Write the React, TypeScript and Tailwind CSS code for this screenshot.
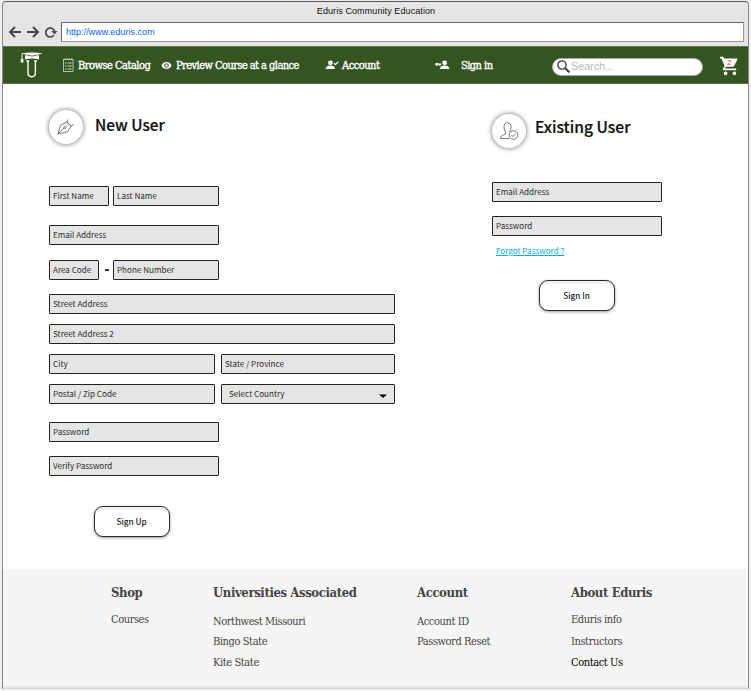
import type { ReactNode } from "react";
import { MdRemoveRedEye } from "react-icons/md";

function Field({ label, className, pad = "pl-[3px]", children }: { label: string; className: string; pad?: string; children?: ReactNode }) {
  return (
    <div className={`flex items-center justify-between rounded-[1px] border border-[#222] bg-[#e5e5e5] ${pad} text-[8.1px] leading-none text-[#2b2b2b] whitespace-nowrap ${className}`}>
      <span>{label}</span>
      {children}
    </div>
  );
}

function RoundIcon({ children }: { children: ReactNode }) {
  return (
    <div className="flex size-[34px] shrink-0 items-center justify-center rounded-full bg-white shadow-[0_0_4px_1px_rgba(0,0,0,0.42)]">
      {children}
    </div>
  );
}

function Button({ label, className }: { label: string; className: string }) {
  return (
    <button className={`flex h-[31px] w-[76px] items-center justify-center rounded-[9px] border border-[#2b2b2b] bg-white pr-px text-[8.2px] leading-none font-medium text-[#222] shadow-[0_1px_3px_rgba(0,0,0,0.4),inset_0_3px_0_#f2f2f2] ${className}`}>
      {label}
    </button>
  );
}

function Column({ title, className, children }: { title: string; className: string; children: ReactNode }) {
  return (
    <div className={`shrink-0 text-[11px] leading-[20px] tracking-[-0.42px] text-[#444] ${className}`}>
      <h3 className="h-[17px] text-[13px] leading-[16px] font-bold tracking-[-0.4px] text-[#444]">{title}</h3>
      {children}
    </div>
  );
}

export default function App() {
  return (
    <div className="h-[691px] w-[751px] overflow-hidden bg-[#f0f0f0] pt-px pl-[2px] font-['Noto_Sans_CJK_JP','Noto_Sans',sans-serif] whitespace-nowrap">
      <div className="flex h-[688px] w-[747px] flex-col rounded-t-[4px] border border-[#555] border-x-[#888] border-b-[#d6d6d6] bg-[#e5e5e5]">
        <header className="h-[44px] shrink-0">
          <div className="h-[20px] pt-[3px] pl-[1px] text-center font-['Liberation_Sans',Arial,sans-serif] text-[9px] leading-[12px] tracking-[0.09px] text-[#111]">
            Eduris Community Education
          </div>
          <div className="flex h-[20px] items-center">
            <svg className="ml-[5px] h-[14px] w-[50px] shrink-0" viewBox="0 0 50 14" fill="none" stroke="#484848" strokeWidth="2">
              <path d="M13 7H2M7 2L2 7l5 5M19 7h11M25 2l5 5-5 5" />
              <path d="M45.8 10.2A4.5 4.5 0 1 1 46.6 6.5" strokeWidth="1.7" />
              <path d="M43.4 6h6l-2.9 3.5z" fill="#484848" stroke="none" />
            </svg>
            <div className="ml-[3px] flex h-[20px] w-[683px] items-center border border-[#666] border-r-[#999] border-b-[#999] bg-white pt-px pl-[4px] font-['Liberation_Sans',Arial,sans-serif] text-[9px] tracking-[0.03px] text-[#0864e8]">
              http://www.eduris.com
            </div>
          </div>
        </header>

        <nav className="flex h-[38px] shrink-0 items-center border-t border-b border-t-[#5e7850] border-b-[#53723f] bg-[#345422] font-['DejaVu_Serif_Condensed','DejaVu_Serif',serif] text-[11px] leading-none text-white">
          <svg className="ml-[17px] h-[27px] w-[24px] shrink-0" viewBox="0 0 24 27" fill="white">
            <path d="M1 1.6Q12-.8 23 1.6L12 3.8z" />
            <path d="M5 3l7 1.4L19 3v4.6q-7-2.2-14 0z" />
            <path d="M1.6 1.6h.9v6h-.9zM.8 7h2.6v3.6H.8z" />
            <path d="M8 9v11.5q0 4.2 3.7 4.2t3.7-4.2V9M6.3 9h3M14 9h3" fill="none" stroke="white" strokeWidth="1.4" />
          </svg>
          <svg className="ml-[19px] h-[14px] w-[11px] shrink-0" viewBox="0 0 11 14" fill="none" stroke="#d3ddcd">
            <rect x=".5" y="1.5" width="9.5" height="12" strokeWidth=".8" />
            <path d="M2 0v2M4.2 0v2M6.4 0v2M8.6 0v2" strokeWidth=".7" />
            <path d="M2 5h1.4M2 8h1.4M2 11h1.4M4.6 5h4M4.6 8h4M4.6 11h4" strokeWidth="1.1" />
          </svg>
          <span className="ml-[4px] w-[83px] shrink-0 tracking-[-0.5px] [-webkit-text-stroke:0.35px_white]">Browse Catalog</span>
          <MdRemoveRedEye className="mt-px size-[11px] shrink-0" />
          <span className="ml-[4px] w-[149px] shrink-0 tracking-[-0.56px] [-webkit-text-stroke:0.35px_white]">Preview Course at a glance</span>
          <svg className="h-[10px] w-[14px] shrink-0" viewBox="0 0 14 10" fill="white">
            <circle cx="5.4" cy="2.8" r="2.4" />
            <path d="M.8 9V7.7Q1.8 5.6 5.4 5.6T10 7.7V9z" />
            <path d="M9 3.2l1.4 1.5L13.4 1.7" fill="none" stroke="white" strokeWidth="1.2" />
          </svg>
          <span className="ml-[3px] w-[93px] shrink-0 tracking-[-0.5px] [-webkit-text-stroke:0.35px_white]">Account</span>
          <svg className="h-[10px] w-[15px] shrink-0" viewBox="0 0 15 10" fill="white">
            <circle cx="9.6" cy="2.8" r="2.4" />
            <path d="M5 9V7.7Q6 5.6 9.6 5.6t4.6 2.1V9z" />
            <circle cx="1.7" cy="4.2" r="1.5" />
            <path d="M2 3.6h4v1.2H5.4V6H4.2V4.8H2z" />
          </svg>
          <span className="ml-[11px] w-[91px] shrink-0 tracking-[-0.55px] [-webkit-text-stroke:0.35px_white]">Sign in</span>
          <div className="mt-[3px] flex h-[18px] w-[151px] shrink-0 items-center rounded-full border border-[#aaa] bg-white pl-[4px] font-['Liberation_Sans',Arial,sans-serif] text-[11px] text-[#b9b9b9]">
            <svg className="size-[13px]" viewBox="0 0 13 13" fill="none" stroke="#3c3c3c">
              <circle cx="5" cy="5" r="4.1" strokeWidth="1.4" />
              <path d="M8 8l4.4 4.4" strokeWidth="2" />
            </svg>
            <span className="ml-px tracking-[-0.15px]">Search...</span>
          </div>
          <div className="relative mt-[2px] ml-[16px] h-[20px] w-[20px] shrink-0">
            <svg className="h-[20px] w-[20px]" viewBox="0 0 20 20" fill="white">
              <path d="M1 .8h3.3l.9 1.8h12.6q1 0 .6 1l-3.2 6.2q-.5 1-1.6 1H7l-1 1.8h11.2v1.6H5.2q-2 0-1-2l1.4-2.3L2.5 2.4H1z" />
              <circle cx="6.6" cy="17.4" r="1.8" />
              <circle cx="15.4" cy="17.4" r="1.8" />
            </svg>
            <span className="absolute top-[3px] left-[8px] font-['Liberation_Sans',Arial,sans-serif] text-[8px] leading-none text-[#e33b20]">2</span>
          </div>
        </nav>

        <main className="flex h-[485px] shrink-0 bg-white">
          <section className="ml-[46px] w-[443px] shrink-0">
            <div className="flex h-[102px] pt-[26px]">
              <RoundIcon>
                <svg className="size-[18px]" viewBox="0 0 18 18" fill="none" stroke="#555" strokeWidth=".8">
                  <path d="M1 16L3.6 7.2 10 4l4 4.2-3.4 5.6zM1 16l6-6M11.2 1.5L10 4l4 4.2 3-2" />
                  <circle cx="7.9" cy="9.3" r="1.1" />
                </svg>
              </RoundIcon>
              <h2 className="mt-[2px] ml-[12px] h-[24px] text-[15.4px] leading-[24px] font-medium text-[#111] [-webkit-text-stroke:0.2px_#111]">New User</h2>
            </div>
            <div className="flex gap-[4px]">
              <Field label="First Name" className="h-[20px] w-[60px]" />
              <Field label="Last Name" className="h-[20px] w-[106px]" />
            </div>
            <Field label="Email Address" className="mt-[19px] h-[20px] w-[170px]" />
            <div className="mt-[15px] flex items-center">
              <Field label="Area Code" className="h-[20px] w-[50px]" />
              <div className="-mt-px ml-[6px] h-[2px] w-[4px] bg-[#333]" />
              <Field label="Phone Number" className="ml-[4px] h-[20px] w-[106px]" />
            </div>
            <Field label="Street Address" className="mt-[14px] h-[20px] w-[346px]" />
            <Field label="Street Address 2" className="mt-[10px] h-[20px] w-[346px]" />
            <div className="mt-[10px] flex gap-[6px]">
              <Field label="City" className="h-[20px] w-[166px]" />
              <Field label="State / Province" className="h-[20px] w-[174px]" />
            </div>
            <div className="mt-[10px] flex gap-[6px]">
              <Field label="Postal / Zip Code" className="h-[20px] w-[166px]" />
              <Field label="Select Country" pad="pl-[7px] pr-[7px]" className="h-[20px] w-[174px]">
                <svg className="mt-[3px] h-[4px] w-[8px]" viewBox="0 0 8 4"><path d="M0 .5h8L4 4z" fill="black" /></svg>
              </Field>
            </div>
            <Field label="Password" className="mt-[18px] h-[20px] w-[170px]" />
            <Field label="Verify Password" className="mt-[14px] h-[20px] w-[170px]" />
            <Button label="Sign Up" className="mt-[30px] ml-[45px]" />
          </section>

          <section className="shrink-0">
            <div className="flex h-[98px] pt-[30px]">
              <RoundIcon>
                <svg className="size-[20px]" viewBox="0 0 20 20" fill="none" stroke="#555" strokeWidth=".8">
                  <path d="M10.5 17.5H1.5q0-3 3-3.6 2.5-.5 2.2-2.3Q5 9.5 5 6q0-4.3 3.5-4.3T12 6q0 3-1.5 5" />
                  <circle cx="14.5" cy="14" r="4.3" />
                  <path d="M12.5 14l1.5 1.5 3-3" />
                </svg>
              </RoundIcon>
              <h2 className="ml-[9px] h-[24px] text-[15.6px] leading-[24px] font-medium text-[#111] [-webkit-text-stroke:0.2px_#111]">Existing User</h2>
            </div>
            <Field label="Email Address" className="h-[20px] w-[170px]" />
            <Field label="Password" className="mt-[14px] h-[20px] w-[170px]" />
            <a className="mt-[9px] ml-[4px] block h-[12px] text-[8.1px] leading-[12px] text-[#08a9ee] underline">Forgot Password ?</a>
            <Button label="Sign In" className="mt-[23px] ml-[47px]" />
          </section>
        </main>

        <footer className="flex h-[117px] shrink-0 bg-[#f5f5f5] pt-[16px] pl-[108px] font-['DejaVu_Serif_Condensed','DejaVu_Serif',serif]">
          <Column title="Shop" className="w-[102px]">
            <p className="mt-[8px]">Courses</p>
          </Column>
          <Column title="Universities Associated" className="w-[204px]">
            <p className="mt-[10px]">Northwest Missouri</p>
            <p>Bingo State</p>
            <p className="mt-px">Kite State</p>
          </Column>
          <Column title="Account" className="w-[154px]">
            <p className="mt-[10px]">Account ID</p>
            <p>Password Reset</p>
          </Column>
          <Column title="About Eduris" className="">
            <p className="mt-[8px]">Eduris info</p>
            <p className="mt-[2px]">Instructors</p>
            <p className="mt-px text-black">Contact Us</p>
          </Column>
        </footer>
      </div>
    </div>
  );
}
